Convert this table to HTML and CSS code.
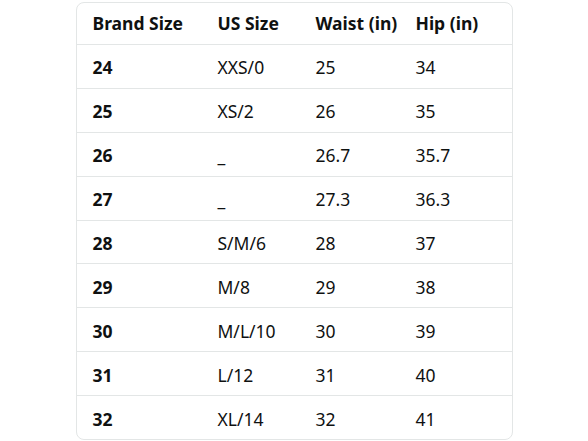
FILE: index.html
```
<!DOCTYPE html>
<html>
<head>
<meta charset="utf-8">
<link rel="stylesheet" href="styles.css">
</head>
<body>
<div class="card">
  <div class="row head"><div>Brand Size</div><div>US Size</div><div>Waist (in)</div><div>Hip (in)</div></div>
  <div class="row"><div class="b">24</div><div>XXS/0</div><div>25</div><div>34</div></div>
  <div class="row"><div class="b">25</div><div>XS/2</div><div>26</div><div>35</div></div>
  <div class="row"><div class="b">26</div><div>_</div><div>26.7</div><div>35.7</div></div>
  <div class="row"><div class="b">27</div><div>_</div><div>27.3</div><div>36.3</div></div>
  <div class="row"><div class="b">28</div><div>S/M/6</div><div>28</div><div>37</div></div>
  <div class="row"><div class="b">29</div><div>M/8</div><div>29</div><div>38</div></div>
  <div class="row"><div class="b">30</div><div>M/L/10</div><div>30</div><div>39</div></div>
  <div class="row"><div class="b">31</div><div>L/12</div><div>31</div><div>40</div></div>
  <div class="row"><div class="b">32</div><div>XL/14</div><div>32</div><div>41</div></div>
</div>
</body>
</html>
```
FILE: styles.css
```
html, body {
  margin: 0;
  padding: 0;
  background: #ffffff;
}
body {
  font-family: "Noto Sans", "Open Sans", sans-serif;
  color: #0f1111;
  font-size: 17.5px;
}
.card {
  width: 435px;
  margin: 2px auto 0;
  border: 1px solid #e3e6e6;
  border-radius: 8px;
  overflow: hidden;
}
.row {
  display: grid;
  grid-template-columns: 125px 98px 100px 1fr;
  align-items: center;
  height: 40.9px;
  border-bottom: 1px solid #e3e6e6;
  padding-top: 2px;
  box-sizing: content-box;
}
.row > div {
  padding-left: 16px;
  line-height: 20px;
}
.row:last-child {
  border-bottom: none;
}
.row.head {
  height: 39px;
  padding-top: 0;
  padding-bottom: 2px;
  font-weight: 700;
}
.b {
  font-weight: 700;
}
```
